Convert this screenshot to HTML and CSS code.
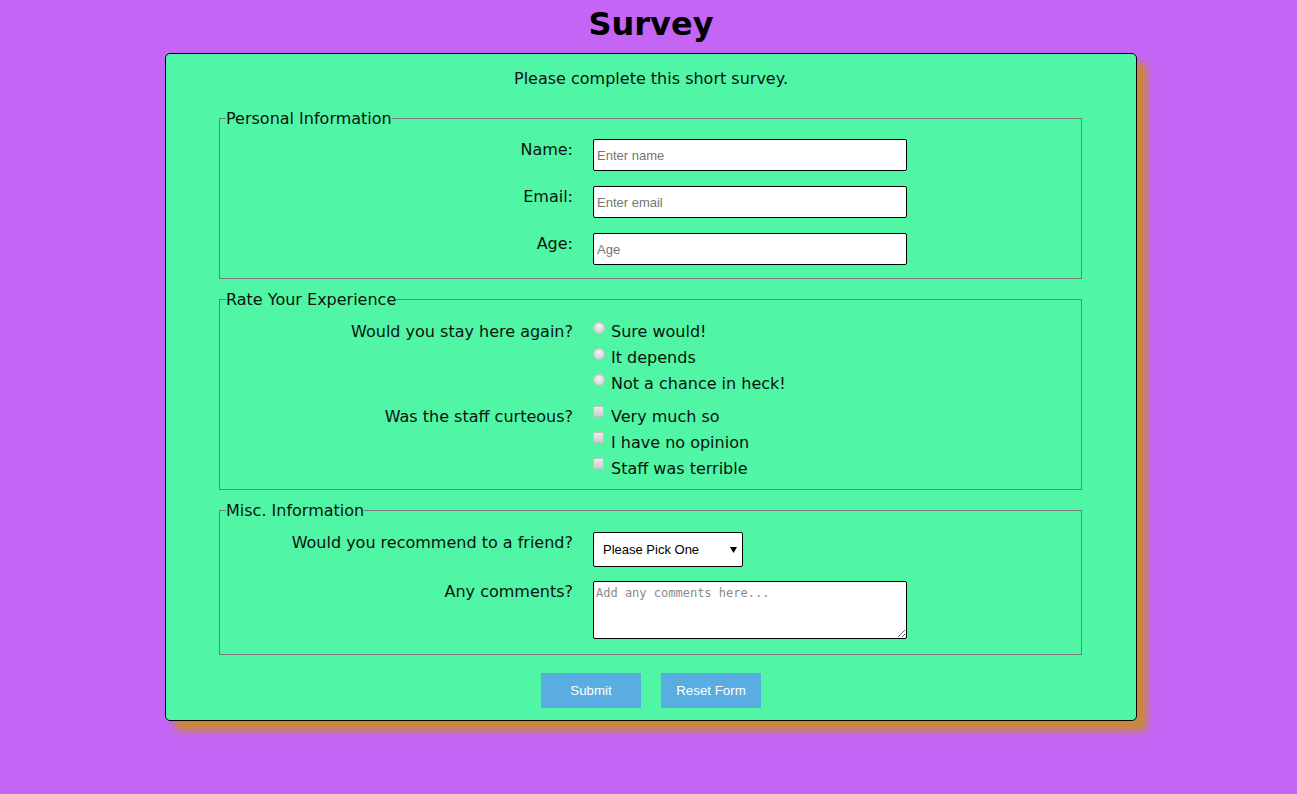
FILE: index.html
```html
<!DOCTYPE html>
<html lang="en">
<head>
<meta charset="utf-8">
<title>Survey</title>
<link rel="stylesheet" href="styles.css">
</head>
<body>
<h1 class="title">Survey</h1>
<form class="card">
  <p class="intro">Please complete this short survey.</p>

  <fieldset class="group group-personal">
    <legend class="group-title">Personal Information</legend>
    <div class="row">
      <label class="row-label" for="name">Name:</label>
      <input class="text-input" id="name" type="text" placeholder="Enter name">
    </div>
    <div class="row">
      <label class="row-label" for="email">Email:</label>
      <input class="text-input" id="email" type="email" placeholder="Enter email">
    </div>
    <div class="row">
      <label class="row-label" for="age">Age:</label>
      <input class="text-input" id="age" type="number" placeholder="Age">
    </div>
  </fieldset>

  <fieldset class="group group-rate">
    <legend class="group-title">Rate Your Experience</legend>
    <div class="row row-choices">
      <span class="row-label">Would you stay here again?</span>
      <div class="choices">
        <label class="choice"><input class="radio" type="radio" name="stay"><span>Sure would!</span></label>
        <label class="choice"><input class="radio" type="radio" name="stay"><span>It depends</span></label>
        <label class="choice"><input class="radio" type="radio" name="stay"><span>Not a chance in heck!</span></label>
      </div>
    </div>
    <div class="row row-choices">
      <span class="row-label">Was the staff curteous?</span>
      <div class="choices">
        <label class="choice"><input class="check" type="checkbox"><span>Very much so</span></label>
        <label class="choice"><input class="check" type="checkbox"><span>I have no opinion</span></label>
        <label class="choice"><input class="check" type="checkbox"><span>Staff was terrible</span></label>
      </div>
    </div>
  </fieldset>

  <fieldset class="group group-misc">
    <legend class="group-title">Misc. Information</legend>
    <div class="row row-select">
      <label class="row-label" for="recommend">Would you recommend to a friend?</label>
      <select class="picker" id="recommend">
        <option>Please Pick One</option>
        <option>Yes</option>
        <option>No</option>
        <option>Maybe</option>
      </select>
    </div>
    <div class="row">
      <label class="row-label" for="comments">Any comments?</label>
      <textarea class="comments" id="comments" placeholder="Add any comments here..."></textarea>
    </div>
  </fieldset>

  <div class="actions">
    <button class="btn" type="submit">Submit</button>
    <button class="btn" type="reset">Reset Form</button>
  </div>
</form>
</body>
</html>
```

FILE: styles.css
```css
html, body {
  margin: 0;
  padding: 0;
}

body {
  background: #c465f6;
  font-family: "DejaVu Sans", Verdana, sans-serif;
  color: #0b130e;
  padding: 0 0 20px 5px;
}

.title {
  margin: 0 0 10px;
  padding-top: 6px;
  font-size: 32px;
  line-height: 37px;
  font-weight: bold;
  text-align: center;
  color: #000;
}

.card {
  width: 972px;
  margin: 0 auto;
  box-sizing: border-box;
  background: #50f6a6;
  border: 1px solid #000;
  border-radius: 5px;
  box-shadow: 10px 10px 7px #c88a3a;
  padding: 15px 0 12px;
}

.intro {
  margin: 0;
  font-size: 16px;
  line-height: 19px;
  text-align: center;
}

.group {
  margin: 11px 54px 0 53px;
  padding: 11px 0 12px;
  border: 1px solid #7a7a7a;
  min-width: 0;
}

.group-personal {
  margin-top: 21px;
  padding-bottom: 13px;
}

.group-rate {
  padding-top: 13px;
  padding-bottom: 11px;
}

.group-misc {
  padding-top: 12px;
}

.group-title {
  margin-left: 6px;
  padding: 0;
  font-size: 16px;
  line-height: 19px;
}

.row {
  display: grid;
  grid-template-columns: 353px 1fr;
  column-gap: 20px;
  align-items: start;
}

.row + .row {
  margin-top: 15px;
}

.row-select + .row {
  margin-top: 14px;
}

.row-label {
  font-size: 16px;
  line-height: 19px;
  text-align: right;
  padding-top: 1px;
}

.text-input {
  box-sizing: border-box;
  width: 314px;
  height: 32px;
  margin: 0;
  padding: 0 3px;
  border: 1px solid #000;
  border-radius: 2px;
  background: #fff;
  font-family: "Liberation Sans", Arial, sans-serif;
  font-size: 13px;
  color: #000;
  -moz-appearance: textfield;
}

.text-input::-webkit-outer-spin-button,
.text-input::-webkit-inner-spin-button {
  -webkit-appearance: none;
  margin: 0;
}

.text-input::placeholder {
  color: #757575;
}

/* choices */
.row-choices .row-label {
  padding-top: 0;
}

.group .row-choices + .row-choices {
  margin-top: 14px;
}

.choices {
  display: flex;
  flex-direction: column;
  gap: 7px;
}

.choice {
  display: flex;
  align-items: flex-start;
  gap: 6px;
  font-size: 16px;
  line-height: 19px;
}

.radio {
  -webkit-appearance: none;
  appearance: none;
  box-sizing: border-box;
  width: 12px;
  height: 12px;
  margin: 0;
  border-radius: 50%;
  border: 1px solid #c4c4c4;
  background: radial-gradient(circle at 50% 35%, #f4f4f4 0%, #dedede 50%, #c9c9c9 100%);
}

.check {
  -webkit-appearance: none;
  appearance: none;
  box-sizing: border-box;
  width: 11px;
  height: 11px;
  margin: -1px 1px 0 0;
  border-radius: 1px;
  border: 1px solid #c2c2c2;
  background: linear-gradient(#ececec, #cdcdcd);
}

/* select */
.picker {
  -webkit-appearance: none;
  appearance: none;
  box-sizing: border-box;
  width: 150px;
  height: 35px;
  margin: 0;
  padding: 0 20px 0 9px;
  border: 1px solid #000;
  border-radius: 2px;
  background-color: #fff;
  background-image: url("data:image/svg+xml,%3Csvg xmlns='http://www.w3.org/2000/svg' width='7' height='6'%3E%3Cpath d='M0 0H7L3.5 6Z' fill='%23000'/%3E%3C/svg%3E");
  background-repeat: no-repeat;
  background-position: right 5px center;
  font-family: "Liberation Sans", Arial, sans-serif;
  font-size: 13px;
  color: #000;
}

.comments {
  display: block;
  box-sizing: border-box;
  width: 314px;
  height: 58px;
  margin: 0 0 3px;
  padding: 4px 2px;
  border: 1px solid #000;
  border-radius: 2px;
  background: #fff;
  font-family: "DejaVu Sans Mono", "Liberation Mono", monospace;
  font-size: 12px;
  resize: both;
}

.comments::placeholder {
  color: #8a8a8a;
}

.actions {
  display: flex;
  justify-content: center;
  gap: 20px;
  margin-top: 18px;
}

.btn {
  width: 100px;
  height: 35px;
  border: none;
  border-radius: 0;
  background: #5aade0;
  color: #fff;
  font-family: "Liberation Sans", Arial, sans-serif;
  font-size: 13.33px;
  font-weight: normal;
  cursor: pointer;
}
```
